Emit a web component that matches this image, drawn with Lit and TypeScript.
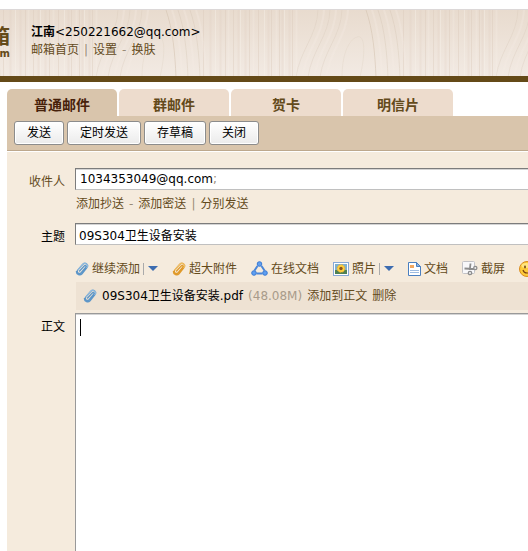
import { LitElement, html, svg, css } from "lit";
import { customElement, property } from "lit/decorators.js";

const clip = (dark: string, light: string) => svg`
  <g fill="none" stroke-linecap="round" stroke-linejoin="round">
    <path d="M4.600 9 9.300 3.900c1-1 2.400.2 1.500 1.300L6.200 10.600c-2 2.300-5.200-.2-3.300-2.700L7.800 2.200c2.600-2.600 6.300.7 4.100 3.400L7 11.800c-1.800 2-5.600 1-5.600-2.200" stroke="${dark}" stroke-width="1.400"/>
    <path d="M2.900 7.900 7.800 2.200c2.600-2.600 6.300.7 4.100 3.400" stroke="${light}" stroke-width=".6"/>
  </g>`;

const icons: Record<string, { w: number; h: number; art: unknown }> = {
  clip: { w: 14, h: 14, art: clip("#5d96c8", "#c4e0f6") },
  bigclip: { w: 14, h: 14, art: clip("#e09a2a", "#fde5a6") },
  share: {
    w: 17, h: 15,
    art: svg`
      <path d="M6.500 5 3.500 9.500M10.500 5l3 4.500M5.500 12.500h6" fill="none" stroke="#4a86d8" stroke-width="2"/>
      <g fill="#5f9ff0" stroke="#3a7ad4">
        <circle cx="8.500" cy="3" r="2.300"/><circle cx="3" cy="12" r="2.300"/><circle cx="14" cy="12" r="2.300"/>
      </g>`,
  },
  photo: {
    w: 16, h: 14,
    art: svg`
      <rect x=".5" y=".5" width="15" height="13" fill="#fff" stroke="#86a8d8"/>
      <rect x="2" y="2" width="12" height="10" fill="#7fb0cc"/>
      <rect x="2" y="8" width="12" height="4" fill="#4f8052"/>
      <circle cx="8" cy="6.500" r="3.800" fill="#ffd23e"/>
      <circle cx="8" cy="6.500" r="3.800" fill="none" stroke="#eda530" stroke-width="1" stroke-dasharray="1.500 1.500"/>
      <circle cx="8" cy="6.500" r="1.700" fill="#8a5420"/>`,
  },
  doc: {
    w: 13, h: 14,
    art: svg`
      <path d="M.5.5h8l4 4v9H.5z" fill="#fff" stroke="#4a7fc0"/>
      <path d="M8.500.5v4h4z" fill="#8db4e2" stroke="#4a7fc0"/>
      <rect x="2" y="3" width="4" height="3" fill="#f3a860"/>
      <path d="M2 8.500h9M2 10.500h9" stroke="#9dbbe0"/>`,
  },
  shot: {
    w: 16, h: 15,
    art: svg`
      <rect x=".5" y=".5" width="12" height="12" rx="1" fill="#f8f8fa" stroke="#c2c2c6"/>
      <path d="M8.500 2.500 7.800 9M2.500 7.500 12 8" stroke="#8d8d8d" stroke-width="1.800"/>
      <circle cx="13.300" cy="7" r="1.600" fill="#eee" stroke="#8d8d8d" stroke-width="1.300"/>
      <circle cx="8" cy="12" r="1.700" fill="#eee" stroke="#8d8d8d" stroke-width="1.300"/>`,
  },
  smile: {
    w: 16, h: 16,
    art: svg`
      <circle cx="8" cy="8" r="7.500" fill="#fdcb3b" stroke="#d98b1c"/>
      <ellipse cx="7" cy="4.500" rx="4.500" ry="2.500" fill="#ffe680"/>
      <path d="M4 9c1 4 7 4 8 0" fill="none" stroke="#7d4310" stroke-width="1.200"/>
      <ellipse cx="6" cy="6" rx=".8" ry="1.400" fill="#5d300a"/><ellipse cx="10.500" cy="6" rx=".8" ry="1.400" fill="#5d300a"/>`,
  },
};

@customElement("mail-icon")
class MailIcon extends LitElement {
  @property() name = "clip";
  static styles = css`
    :host { display: flex; flex: none; }
    svg { display: block; }
  `;
  render() {
    const { w, h, art } = icons[this.name];
    return html`<svg width=${w} height=${h} viewBox="0 0 ${w} ${h}" aria-hidden="true">${art}</svg>`;
  }
}

/* Repeating light wood background */
@customElement("wood-grain")
class WoodGrain extends LitElement {
  static styles = css`
    :host { display: block; }
    svg { display: block; width: 100%; height: 100%; }
  `;
  render() {
    const straight = [2, 6, 9, 14, 17, 20, 22, 27, 30, 34, 141, 148, 153, 158, 163, 166, 171, 176, 178, 183, 187, 191, 196];
    const slanted = [46, 52, 58, 64, 70, 76];
    const bowed = [108, 114, 120, 126, 132, 138];
    return html`<svg aria-hidden="true">
      <defs>
        <linearGradient id="base" x2="0" y2="1">
          <stop offset="0" stop-color="#e8dbce"/><stop offset="1" stop-color="#f2eae3"/>
        </linearGradient>
        <pattern id="grain" x="62" width="200" height="67" patternUnits="userSpaceOnUse">
          ${straight.map((x, i) => svg`<path d="M${x + 0.5} 0V67" stroke=${i % 3 ? "#d9c8b8" : "#f8f1ea"} stroke-width=${1 + (i % 2)} opacity=${i % 2 ? 0.2 : 0.4}/>`)}
          ${slanted.map((x, i) => svg`<path d="M${x + 10} 0C${x + 9} 26 ${x - 8} 40 ${x - 12} 67" fill="none" stroke=${i % 2 ? "#f6eee6" : "#d6c5b4"} stroke-width=${1 + (i % 2)} opacity=".3"/>`)}
          ${bowed.map((x, i) => svg`<path d="M${x - 4} 0C${x + 3} 20 ${x + 5} 44 ${x + 6} 67" fill="none" stroke=${i % 2 ? "#f6eee6" : "#d0bda9"} stroke-width=${1 + (i % 2)} opacity=${i ? 0.3 : 0.5}/>`)}
          <path d="M80 67C80 46 86 30 95 27S103 46 98 67" fill="none" stroke="#dccdbd" opacity=".3"/>
        </pattern>
      </defs>
      <rect width="100%" height="100%" fill="url(#base)"/>
      <rect width="100%" height="100%" fill="url(#grain)"/>
    </svg>`;
  }
}

@customElement("app-root")
class AppRoot extends LitElement {
  static styles = css`
    :host {
      display: flex;
      flex-direction: column;
      min-height: 100vh;
      box-sizing: border-box;
      padding-top: 9px;
      overflow: hidden;
      background: #fff;
      color: #000;
      font: 12px/18px "DejaVu Sans", "Noto Sans CJK SC", sans-serif;
      white-space: nowrap;
    }
    * { box-sizing: border-box; }
    a { color: #634a1b; text-decoration: none; }
    button, input, textarea { font: inherit; color: inherit; }
    .header {
      position: relative;
      display: flex;
      gap: 21px;
      height: 73px;
      border-top: 1px solid #dcd8d8;
      border-bottom: 6px solid #644a18;
      overflow: hidden;
    }
    .wood { position: absolute; inset: 0; }
    .logo {
      position: relative;
      display: flex;
      flex-direction: column;
      align-items: flex-end;
      width: 10px;
      padding-top: 16px;
      color: #644a18;
      font-weight: bold;
    }
    .brand { font-size: 20px; line-height: 22px; }
    .domain { font: bold 10px/12px "DejaVu Sans", sans-serif; }
    .account { position: relative; padding-top: 13px; }
    .muted { color: #9a8b76; }
    .links { display: flex; gap: 5px; }
    .compose {
      flex: 1;
      display: flex;
      flex-direction: column;
      margin: 7px 0 0 7px;
    }
    .tabs { display: flex; gap: 2px; }
    .tab {
      width: 110px;
      height: 27px;
      padding: 5px 0 0;
      border: 0;
      border-radius: 5px 5px 0 0;
      background: #eddccd;
      color: #634a1b;
      font-size: 14px;
      line-height: 22px;
      font-weight: bold;
    }
    .active { background: #d9c5ac; color: #47210a; }
    .actions {
      display: flex;
      gap: 3px;
      height: 35px;
      padding: 5px 7px;
      background: #d9c5ac;
      border-bottom: 1px solid #bda88d;
    }
    .action {
      height: 24px;
      padding: 0 12px;
      border: 1px solid #8c8c8c;
      border-radius: 3px;
      background: linear-gradient(#fff, #ebebeb);
      box-shadow: inset 0 0 0 1px #fff;
    }
    .form {
      flex: 1;
      display: grid;
      grid-template-columns: 58px minmax(0, 1fr);
      grid-template-rows: auto auto auto 1fr;
      column-gap: 10px;
      border-top: 1px solid #fff;
      padding-top: 16px;
      background: #f5ebdd;
    }
    .label { padding-top: 5px; text-align: right; }
    .field {
      display: flex;
      height: 22px;
      width: 100%;
      border: 1px solid #c0c0c0;
      border-top-color: #7c7c7c;
      border-left-color: #7c7c7c;
      border-right: 0;
      border-radius: 0;
      background: #fff;
      box-shadow: inset 0 1px #d4d4d4;
      padding: 0 3px;
      outline: 0;
      line-height: 20px;
    }
    .recipient { padding-left: 4px; }
    .entry { flex: 1; min-width: 0; border: 0; padding: 0; background: none; outline: 0; }
    .extras { display: flex; gap: 5px; padding: 5px 0 10px 1px; }
    .tools { display: flex; gap: 14px; height: 27px; margin-top: 9px; align-items: center; }
    .tool { display: flex; gap: 3px; align-items: center; flex: none; }
    .more { display: flex; align-items: center; gap: 4px; padding: 0; border: 0; background: none; }
    .bar { width: 1px; height: 12px; background: #aaa; }
    .arrow { border: 5px solid transparent; border-top-color: #3d6cb0; border-bottom: 0; }
    .attachment {
      display: flex;
      align-items: center;
      gap: 5px;
      height: 28px;
      margin: 0 0 3px 1px;
      padding-left: 7px;
      background: #eee2d3;
    }
    .size { color: #a89b8a; }
    .editor { position: relative; display: flex; min-height: 200px; }
    .body {
      flex: 1;
      min-width: 0;
      resize: none;
      border: solid #999;
      border-width: 1px 0 0 1px;
      border-radius: 0;
      background: #fff;
      box-shadow: inset 0 1px #d4d4d4;
      padding: 6px 4px;
      outline: 0;
    }
    .caret { position: absolute; left: 5px; top: 6px; width: 1px; height: 17px; background: #000; }
  `;

  tools = [
    { icon: "clip", text: "继续添加", menu: true },
    { icon: "bigclip", text: "超大附件" },
    { icon: "share", text: "在线文档" },
    { icon: "photo", text: "照片", menu: true },
    { icon: "doc", text: "文档" },
    { icon: "shot", text: "截屏" },
    { icon: "smile", text: "" },
  ];

  render() {
    return html`
      <header class="header">
        <wood-grain class="wood"></wood-grain>
        <div class="logo"><span class="brand">箱</span><span class="domain">m</span></div>
        <div class="account">
          <div><b>江南</b>&lt;250221662@qq.com&gt;</div>
          <nav class="links">
            <a href="#">邮箱首页</a><span class="muted">|</span><a href="#">设置</a><span class="muted">-</span><a href="#">换肤</a>
          </nav>
        </div>
      </header>
      <main class="compose">
        <div class="tabs" role="tablist">
          ${["普通邮件", "群邮件", "贺卡", "明信片"].map((t, i) => html`
            <button class="tab ${i ? "" : "active"}" role="tab" aria-selected=${i === 0}>${t}</button>`)}
        </div>
        <div class="actions">
          ${["发送", "定时发送", "存草稿", "关闭"].map((t) => html`<button class="action">${t}</button>`)}
        </div>
        <div class="form">
          <label class="label" for="to"><a href="#">收件人</a></label>
          <div>
            <div class="field recipient">
              <span>1034353049@qq.com</span><span class="muted">;</span>
              <input class="entry" id="to" />
            </div>
            <div class="extras">
              <a href="#">添加抄送</a><span class="muted">-</span><a href="#">添加密送</a><span class="muted">|</span><a href="#">分别发送</a>
            </div>
          </div>
          <label class="label" for="subject">主题</label>
          <input class="field" id="subject" .value=${"09S304卫生设备安装"} />
          <span></span>
          <div>
            <div class="tools">
              ${this.tools.map((t) => html`
                <span class="tool">
                  <mail-icon name=${t.icon}></mail-icon>${t.text ? html`<a href="#">${t.text}</a>` : ""}
                  ${t.menu ? html`<button class="more" aria-label="${t.text}"><span class="bar"></span><span class="arrow"></span></button>` : ""}
                </span>`)}
            </div>
            <div class="attachment">
              <mail-icon name="clip"></mail-icon>
              <span>09S304卫生设备安装.pdf</span>
              <span class="size">(48.08M)</span>
              <a href="#">添加到正文</a>
              <a href="#">删除</a>
            </div>
          </div>
          <label class="label" for="body">正文</label>
          <div class="editor">
            <textarea class="body" id="body"></textarea>
            <span class="caret"></span>
          </div>
        </div>
      </main>`;
  }
}
